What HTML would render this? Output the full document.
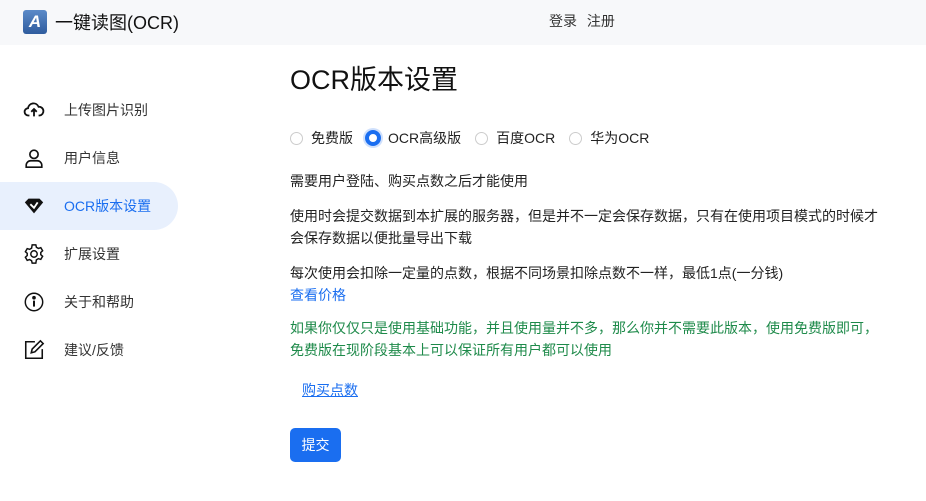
<!DOCTYPE html>
<html><head><meta charset="utf-8"><style>
*{margin:0;padding:0;box-sizing:border-box}
body{width:926px;height:501px;background:#fff;font-family:"Liberation Sans","Noto Sans CJK SC",sans-serif;color:#222;position:relative;overflow:hidden}
.hdr{height:45px;background:#f7f8fa;position:relative}
.logo{position:absolute;left:23px;top:10px;width:24px;height:24px;border-radius:3px;background:linear-gradient(#5b8ac8,#2f5c9e);color:#fff;font-weight:bold;font-style:italic;font-size:17px;text-align:center;line-height:24px}
.title{position:absolute;left:55px;top:9px;font-size:18px;color:#111}
.nav{position:absolute;left:549px;top:11px;font-size:14px;color:#333;word-spacing:6px}
.side{position:absolute;left:0;top:86px;width:178px}
.item{height:48px;display:flex;align-items:center;font-size:14px;color:#333;position:relative}
.item svg{position:absolute;left:23px}
.item span{position:absolute;left:64px}
.item.act{background:#e8f0fd;border-radius:0 24px 24px 0;color:#1a6ef0}
.main{position:absolute;left:290px}
p{font-size:14px;line-height:22px}
</style></head><body>
<div class="hdr"><div class="logo">A</div><div class="title">一键读图(OCR)</div><div class="nav">登录 注册</div></div>
<div class="side">
<div class="item"><svg width="22" height="22" viewBox="0 0 24 24" fill="none" stroke="#111" stroke-width="2"><path d="M7 18H6a4 4 0 0 1-.5-8A6 6 0 0 1 17 8.5a4.7 4.7 0 0 1 1 9.5h-1"/><path d="M12 19v-8M9 14l3-3 3 3"/></svg><span>上传图片识别</span></div>
<div class="item"><svg width="22" height="22" viewBox="0 0 24 24" fill="none" stroke="#111" stroke-width="1.8"><circle cx="12" cy="8" r="4.5"/><path d="M3.5 22v-2a5 5 0 0 1 5-5h7a5 5 0 0 1 5 5v2z"/></svg><span>用户信息</span></div>
<div class="item act"><svg width="22" height="22" viewBox="0 0 24 24"><path d="M2 8l4-4h12l4 4-10 12z" fill="#111"/><path d="M8 10l4 4 4-6" stroke="#fff" stroke-width="2" fill="none"/></svg><span>OCR版本设置</span></div>
<div class="item"><svg width="22" height="22" viewBox="0 0 24 24" fill="none" stroke="#111" stroke-width="1.6"><circle cx="12" cy="12" r="3.5"/><path d="M10 2h4l.6 2.6 2.2 1.3 2.6-.8 2 3.4-2 1.8v2.4l2 1.8-2 3.4-2.6-.8-2.2 1.3L14 22h-4l-.6-2.6-2.2-1.3-2.6.8-2-3.4 2-1.8v-2.4l-2-1.8 2-3.4 2.6.8 2.2-1.3z"/></svg><span>扩展设置</span></div>
<div class="item"><svg width="22" height="22" viewBox="0 0 24 24" fill="none" stroke="#111" stroke-width="1.6"><circle cx="12" cy="12" r="9.5"/><path d="M12 10.5v6.5" stroke-width="2.2"/><circle cx="12" cy="7.3" r="1.2" fill="#111"/></svg><span>关于和帮助</span></div>
<div class="item"><svg width="22" height="22" viewBox="0 0 24 24" fill="none" stroke="#111" stroke-width="1.7"><path d="M13 3H3v18h18V11"/><path d="M9 15l1-4 9-9 3 3-9 9z"/></svg><span>建议/反馈</span></div>
</div>
<div class="main" style="top:58px;font-size:27px;color:#111">OCR版本设置</div>
<div class="main" style="top:128px;font-size:14px;display:flex;align-items:center;color:#222">
<span style="width:13px;height:13px;border:1px solid #ccc;border-radius:50%;display:inline-block;margin-right:8px"></span>免费版
<span style="width:16px;height:16px;border:4.5px solid #1a6ef0;border-radius:50%;display:inline-block;margin:0 7px 0 12px;box-shadow:0 0 0 2px #cfe0fc"></span>OCR高级版
<span style="width:13px;height:13px;border:1px solid #ccc;border-radius:50%;display:inline-block;margin:0 8px 0 14px"></span>百度OCR
<span style="width:13px;height:13px;border:1px solid #ccc;border-radius:50%;display:inline-block;margin:0 8px 0 14px"></span>华为OCR
</div>
<p class="main" style="top:170px">需要用户登陆、购买点数之后才能使用</p>
<p class="main" style="top:205px;width:595px">使用时会提交数据到本扩展的服务器，但是并不一定会保存数据，只有在使用项目模式的时候才会保存数据以便批量导出下载</p>
<p class="main" style="top:262px">每次使用会扣除一定量的点数，根据不同场景扣除点数不一样，最低1点(一分钱)<br><span style="color:#1a6ef0">查看价格</span></p>
<p class="main" style="top:317px;color:#1e8a4a;width:600px">如果你仅仅只是使用基础功能，并且使用量并不多，那么你并不需要此版本，使用免费版即可，免费版在现阶段基本上可以保证所有用户都可以使用</p>
<p class="main" style="top:379px;left:302px;color:#1a6ef0;text-decoration:underline">购买点数</p>
<div class="main" style="top:428px;width:51px;height:34px;background:#1a6ef0;border-radius:5px;color:#fff;font-size:14px;text-align:center;line-height:34px">提交</div>
</body></html>
